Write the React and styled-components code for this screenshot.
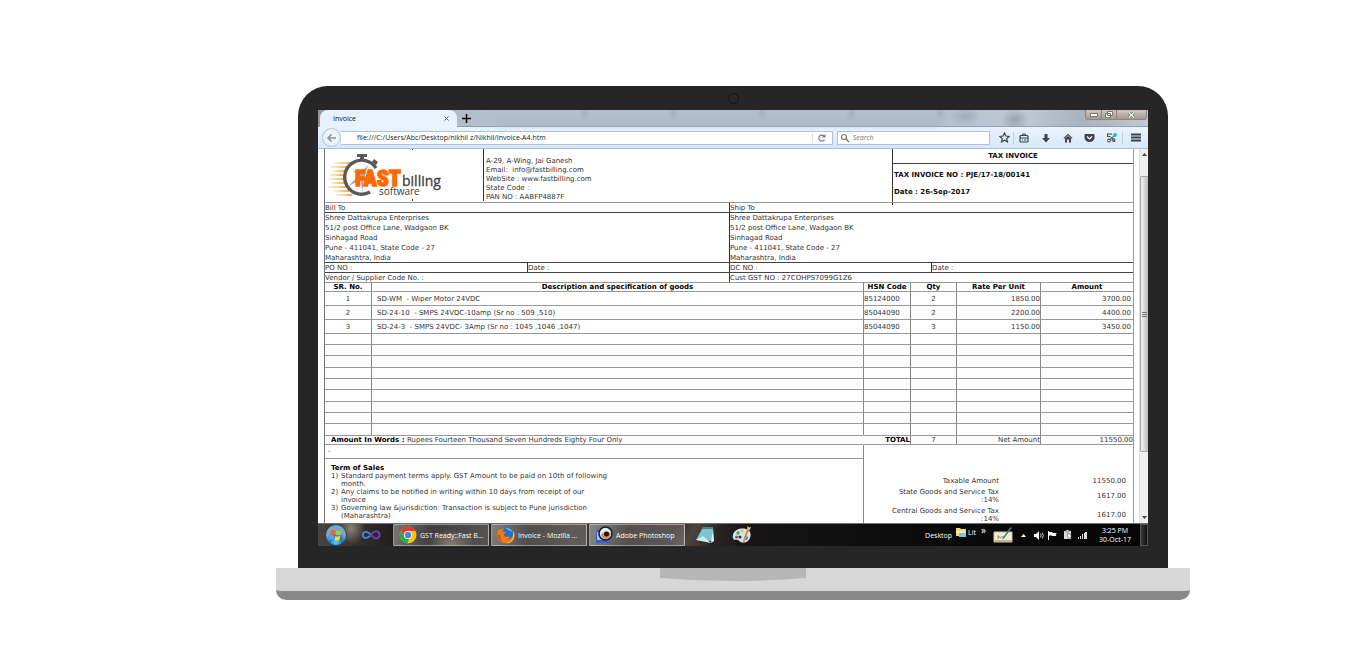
import React, { useState } from 'react';

import styled, { createGlobalStyle } from 'styled-components';

const GlobalStyle = createGlobalStyle`
  * {
    box-sizing: border-box;
  }

  body {
    margin: 0;
    background: #fff;
  }

  button, input {
    margin: 0;
    padding: 0;
    border: none;
    background: none;
    font: inherit;
    color: inherit;
  }

  svg {
    display: block;
    flex-shrink: 0;
  }
`;

const verdana = '"DejaVu Sans", Verdana, sans-serif';
const segoe = '"Open Sans", "Segoe UI", sans-serif';

/* laptop */

const Page = styled.main`
  padding: 86px 156px 48px 276px;
`;

const Lid = styled.div`
  margin: 0 22px;
  padding: 0 20px 22px;
  background: #262626;
  border-radius: 30px 30px 0 0;
`;

const CameraBar = styled.div`
  display: flex;
  justify-content: center;
  align-items: center;
  height: 24px;
`;

const Camera = styled.div`
  width: 11px;
  height: 11px;
  border: 1px solid #121212;
  border-radius: 50%;
`;

const Screen = styled.div`
  overflow: hidden;
  background: #fff;
  font-family: ${segoe};
  font-size: 7px;
  line-height: 9px;
`;

const Base = styled.div`
  display: flex;
  justify-content: center;
  height: 32px;
  background: #d7d7d7;
  border-bottom: 9px solid #888;
  border-radius: 0 0 10px 10px;
`;

const Notch = styled.svg`
  width: 146px;
  height: 13px;
`;

/* browser */

const TabStrip = styled.div`
  display: flex;
  align-items: flex-end;
  height: 17px;
  padding-left: 2px;
  background:
    radial-gradient(ellipse 16px 9px at 78% 40%, #9eabb8, transparent),
    radial-gradient(ellipse 14px 12px at 84% 60%, #99a3ad, transparent),
    linear-gradient(90deg, #9a9390 0, #a9adb3 2%, #b3c0ce 20%, #aebccb 70%, #bdc9d5 85%, #a7b3bf 92%, #c3c9cf 100%);
  border-bottom: 1px solid #8d9db0;
`;

const Tab = styled.div`
  display: flex;
  align-items: center;
  align-self: stretch;
  justify-content: space-between;
  width: 137px;
  margin-bottom: -1px;
  padding: 0 7px 0 13px;
  background: #e8f2fc;
  border-radius: 8px 8px 0 0;
  color: #111;
`;

const TabButton = styled.button`
  display: flex;
  align-items: center;
  justify-content: center;
  width: 7px;
  height: 9px;
  color: #555;
`;

const NewTab = styled.button`
  display: flex;
  align-items: center;
  justify-content: center;
  width: 18px;
  height: 16px;
`;

const GhostTabs = styled.div`
  display: flex;
  flex: 1;
  align-self: stretch;
  margin: 0 0 0 22px;
  filter: blur(2px);
`;

const GhostTab = styled.div`
  flex: 1;
  max-width: 89px;
  background:
    radial-gradient(ellipse 5px 7px at 100% 20%, #8593a2, transparent),
    linear-gradient(#b3c1cf, #adbac8);
`;

const WindowControls = styled.div`
  display: flex;
  align-self: flex-start;
  height: 10px;
  margin-right: 1px;
  border: 1px solid #8e8683;
  border-top: none;
  border-radius: 0 0 3px 3px;
  background: linear-gradient(#cfc6c1, #a39a95);
`;

const WindowButton = styled.button`
  display: flex;
  align-items: center;
  justify-content: center;
  width: ${props => (props.$wide ? '30px' : '15px')};
  border-left: ${props => (props.$first ? 'none' : '1px solid #8a817d')};
`;

const Toolbar = styled.div`
  display: flex;
  align-items: center;
  height: 22px;
  padding-left: 4px;
  background: linear-gradient(#e9f3fd, #d8e8f8);
  border-bottom: 1px solid #a8bfd6;
`;

const BackButton = styled.button`
  display: flex;
  align-items: center;
  justify-content: center;
  width: 19px;
  height: 19px;
  background: #eaf3fb;
  border: 1px solid #b0c2d4;
  border-radius: 50%;
`;

const Field = styled.label`
  display: flex;
  align-items: center;
  flex: ${props => props.$grow};
  height: 14px;
  margin-right: 4px;
  background: #fff;
  border: 1px solid #b0c2d5;
  border-left-width: ${props => (props.$joined ? '0' : '1px')};
`;

const UrlInput = styled.input`
  flex: 1;
  min-width: 0;
  padding-left: 16px;
  color: #222;
  outline: none;
`;

const SearchInput = styled.input`
  flex: 1;
  min-width: 0;
  padding-left: 3px;
  outline: none;

  &::placeholder {
    color: #777;
    font-style: italic;
    opacity: 1;
  }
`;

const ReloadButton = styled.button`
  display: flex;
  align-items: center;
  justify-content: center;
  width: 20px;
  height: 10px;
  border-left: 1px solid #d9dfe6;
`;

const ToolbarButton = styled.button`
  display: flex;
  align-items: center;
  justify-content: center;
  width: ${props => props.$width || '22px'};
  height: 12px;
  border-left: 1px solid ${props => (props.$divided ? '#c3cfdb' : 'transparent')};
  color: #3d4349;
`;

const Viewport = styled.div`
  display: flex;
  height: 374px;
  overflow: hidden;
  font-family: ${verdana};
  color: #333;
`;

const Scrollbar = styled.div`
  display: flex;
  flex-direction: column;
  align-items: center;
  width: 9px;
  padding: 2px 0;
  background: #efefef;
  border-left: 1px solid #ddd;
`;

const ScrollThumb = styled.div`
  display: flex;
  align-items: center;
  justify-content: center;
  width: 9px;
  height: 276px;
  margin: 18px 0 auto;
  background: linear-gradient(90deg, #f1f1f1, #d2d2d6 60%, #b9b9c0);
  border: 1px solid #a8a8ac;
  border-radius: 1px;
`;

/* invoice */

const Invoice = styled.article`
  flex: 1;
  margin: 0 5px 0 6px;
  border-left: 1px solid #777;
  border-right: 1px solid #999;
`;

const InvoiceHeader = styled.header`
  display: grid;
  grid-template-columns: 158px 1fr 241px;
  height: 53px;
`;

const LogoCell = styled.div`
  padding-left: 3px;
`;

const Company = styled.address`
  height: 52px;
  padding: 8px 2px 0;
  border-left: 1px solid #333;
  font-style: normal;
  white-space: pre;
`;

const InvoiceInfo = styled.div`
  border-left: 1px solid #333;
  font-weight: bold;
  color: #111;
`;

const InvoiceTitle = styled.h1`
  height: 15px;
  margin: 0;
  padding-top: 3px;
  border-bottom: 1px solid #444;
  font-size: 7px;
  line-height: 9px;
  text-align: center;
`;

const InfoLine = styled.p`
  margin: 0 0 8px;
  padding-left: 1px;

  &:first-of-type {
    margin-top: 7px;
  }
`;

const Parties = styled.section`
  display: grid;
  grid-template-columns: repeat(4, 1fr);
  grid-template-rows: 10px 50px 10px 10px;
`;

const PartyCell = styled.div`
  grid-column: span ${props => props.$span || 1};
  border-top: 1px solid ${props => (props.$light ? '#999' : '#444')};
  border-left: ${props => (props.$divided ? '1px solid #333' : 'none')};
  line-height: 10px;
  white-space: pre;
`;

const Items = styled.table`
  width: 100%;
  table-layout: fixed;
  border-collapse: separate;
  border-spacing: 0;
`;

const Col = styled.col`
  width: ${props => props.$width || 'auto'};
`;

const HeadCell = styled.th`
  height: 9px;
  padding: 0;
  border-top: 1px solid #999;
  border-left: 1px solid #888;
  line-height: 8px;
  color: #000;

  &:first-child {
    border-left: none;
  }
`;

const Cell = styled.td`
  height: 14px;
  padding: 1px ${props => props.$right || 0} 0 ${props => props.$left || 0};
  border-top: 1px solid #999;
  border-left: 1px solid #888;
  line-height: 10px;
  text-align: ${props => props.$align || 'left'};
  white-space: pre;

  &:first-child {
    border-left: none;
  }
`;

const EmptyRow = styled.tr`
  td {
    height: 11px;
  }

  &:nth-child(3n) td {
    height: 12px;
  }
`;

const TotalCell = styled(Cell)`
  height: 10px;
  padding-top: 0;
  border-left-color: ${props => (props.$open ? 'transparent' : '#888')};
  border-bottom: 1px solid #999;
  line-height: 8px;
`;

const Strong = styled.strong`
  color: #000;
`;

const Footer = styled.footer`
  display: grid;
  grid-template-columns: 1fr 270px;
`;

const Remark = styled.div`
  height: 14px;
  padding: 2px 3px;
  border-bottom: 1px solid #999;
`;

const Terms = styled.section`
  padding: 5px 6px;
  line-height: 8px;
`;

const TermsTitle = styled.h2`
  margin: 0;
  font-size: 7px;
  line-height: 8px;
  color: #000;
`;

const TermsList = styled.ul`
  width: 290px;
  margin: 0;
  padding: 0;
  list-style: none;
`;

const Term = styled.li`
  display: grid;
  grid-template-columns: 10px 1fr;
  white-space: pre;
`;

const Taxes = styled.div`
  padding-top: 31px;
  border-left: 1px solid #888;
`;

const TaxTable = styled.table`
  width: 100%;
  border-collapse: collapse;
  line-height: 8px;
  text-align: right;
`;

const TaxLabel = styled.th`
  width: 135px;
  padding: 1px 0 2px;
  font-weight: normal;
  white-space: pre;
`;

const TaxValue = styled.td`
  padding: 0 7px 2px 0;
`;

/* taskbar */

const Taskbar = styled.footer`
  display: flex;
  align-items: center;
  height: 23px;
  padding-left: 6px;
  background:
    radial-gradient(ellipse 14px 16px at 4% 20%, #8d8172, transparent),
    radial-gradient(ellipse 24px 14px at 16% 90%, #6d6459, transparent),
    linear-gradient(120deg, transparent 43%, #4b433d 45%, transparent 48%),
    linear-gradient(90deg, #4a443e 0, #1c1a19 10%, #3a3633 30%, #37312d 44%, #171515 52%, #0c0c0c 70%, #060606 100%);
  border-top: 1px solid #6e6e6e;
  color: #fff;
`;

const IconButton = styled.button`
  display: flex;
  align-items: center;
  justify-content: center;
  width: ${props => props.$width};
  height: 22px;
`;

const TaskButton = styled.button`
  display: flex;
  align-items: center;
  gap: 3px;
  width: 96px;
  height: 22px;
  margin-right: 2px;
  padding-left: 5px;
  background: linear-gradient(100deg, rgba(255, 255, 255, 0.4), rgba(255, 255, 255, 0.14) 40%, rgba(255, 255, 255, 0.2));
  border: 1px solid rgba(255, 255, 255, 0.4);
  border-radius: 1px;
  white-space: nowrap;
`;

const Tray = styled.div`
  display: flex;
  align-items: center;
  margin-left: auto;
`;

const Libraries = styled.div`
  display: flex;
  gap: 2px;
  margin: 0 5px 5px 4px;
`;

const Overflow = styled.button`
  margin: 0 7px 10px 0;
  font-size: 10px;
`;

const Clock = styled.time`
  width: 50px;
  text-align: center;
`;

const ShowDesktop = styled.button`
  width: 8px;
  height: 22px;
  background: linear-gradient(90deg, #3a3a3a, #111);
  border: 1px solid #555;
`;

const Logo = () => (
  <svg width="122" height="52" viewBox="0 0 122 52">
    <defs>
      <linearGradient id="speed">
        <stop offset="0" stopColor="#fbb040" stopOpacity="0.15" />
        <stop offset="1" stopColor="#f7941d" stopOpacity="0.8" />
      </linearGradient>
    </defs>
    {[13, 17, 21, 25, 29, 33, 37, 41, 45].map((y, i) => (
      <rect
        key={y}
        x={[5, 2, 4, 1, 0, 3, 0, 5, 7][i]}
        y={y}
        width={[19, 17, 13, 14, 16, 13, 19, 16, 17][i]}
        height="2"
        fill="url(#speed)"
      />
    ))}
    <circle cx="33.5" cy="28" r="16" fill="#fff" />
    <path d="M48 19A17 17 0 1 0 42 43" fill="none" stroke="#58595b" strokeWidth="3.400" />
    <path d="M29 5h10v3h-3v3h-4V8h-3zM46 10l4 3-2 3-4-3z" fill="#58595b" />
    <path d="m40 16-4 14-2 14-1-13-13 6 11-10-7-6 8 4z" fill="#a7a9ac" />
    <text
      x="27"
      y="37"
      fontFamily='"Liberation Sans Narrow", "Roboto Condensed", "Open Sans Condensed", Roboto, sans-serif'
      fontWeight="900"
      fontSize="22"
      fill="#ff6a00"
      stroke="#ff6a00"
      strokeWidth="1.400"
    >
      FAST
    </text>
    <text x="74" y="37" fontFamily='"Open Sans", sans-serif' fontSize="14" fill="#414042" stroke="#414042" strokeWidth="0.300">billing</text>
    <text x="51" y="46" fontFamily='"Open Sans", sans-serif' fontSize="10" fill="#414042">software</text>
    <path d="M84 0h1v1h-1zM84 50h1v2h-1z" fill="#333" />
  </svg>
);

const StarIcon = () => (
  <svg width="11" height="11" viewBox="0 0 11 11">
    <path d="M5.500 1 6.900 4l3.200.4-2.400 2.200.7 3.300-2.900-1.700-2.900 1.700.7-3.300L.9 4.400 4.100 4z" fill="none" stroke="currentColor" strokeWidth="1.200" />
  </svg>
);

const ClipboardIcon = () => (
  <svg width="10" height="10" viewBox="0 0 10 10">
    <rect x="1" y="2.500" width="8" height="6.500" rx="1" fill="none" stroke="currentColor" strokeWidth="1.200" />
    <path d="M3.500 2.500v-1.500h3v1.500M1 5h8M3 7h1M5 7h2" fill="none" stroke="currentColor" />
  </svg>
);

const DownloadIcon = () => (
  <svg width="10" height="10" viewBox="0 0 10 10">
    <path d="M3.500 1h3v4H9L5 9.500 1 5h2.500z" fill="currentColor" />
  </svg>
);

const HomeIcon = () => (
  <svg width="10" height="10" viewBox="0 0 10 10">
    <path d="M5 .8 9.500 5l-.7.7L5 2.300 1.200 5.700.5 5zM2 5.600l3-2.600 3 2.600V9.500H6V6.500H4v3H2z" fill="currentColor" />
  </svg>
);

const PocketIcon = () => (
  <svg width="11" height="10" viewBox="0 0 11 10">
    <path d="M1.500 1h8q1 0 1 1v2.500a5 4.500 0 0 1-10 0V2q0-1 1-1z" fill="currentColor" />
    <path d="M3 3.500 5.500 6 8 3.500" fill="none" stroke="#fff" strokeWidth="1.200" />
  </svg>
);

const ScissorsIcon = () => (
  <svg width="12" height="11" viewBox="0 0 12 11">
    <path d="M1 2h5M1.500 2v2.500h3M3 8l5-4M5 5l4 5" fill="none" stroke="currentColor" />
    <circle cx="3" cy="8.500" r="1.500" fill="none" stroke="currentColor" />
    <circle cx="7.500" cy="8" r="1.500" fill="none" stroke="currentColor" />
    <circle cx="9" cy="3" r="2" fill="#12c8d8" />
  </svg>
);

const MenuIcon = () => (
  <svg width="10" height="9" viewBox="0 0 10 9">
    <path d="M0 1.500h10M0 4.500h10M0 7.500h10" stroke="currentColor" strokeWidth="2" />
  </svg>
);

const StartIcon = () => (
  <svg width="22" height="22" viewBox="0 0 22 22">
    <defs>
      <radialGradient id="orb" cx="0.5" cy="0.85">
        <stop offset="0" stopColor="#5fd4f5" />
        <stop offset="0.6" stopColor="#2371b0" />
        <stop offset="1" stopColor="#7aa6c6" />
      </radialGradient>
    </defs>
    <circle cx="11" cy="11" r="10.500" fill="url(#orb)" stroke="#1d4668" />
    <path d="M5.500 7q2.500-2 5-.7l-.8 4.200q-2.500-1.200-5 .5z" fill="#f0642b" />
    <path d="M11.300 6.700q2.500 1.200 5-.5l-.8 4.200q-2.500 1.600-5 .4z" fill="#9cd33c" />
    <path d="M4.500 12q2.500-1.700 5-.5l-.8 4.200q-2.500-1.200-5 .3z" fill="#49a8ec" />
    <path d="M10.300 11.900q2.500 1.200 5-.4l-.8 4.200q-2.500 1.600-5 .3z" fill="#ffd23e" />
  </svg>
);

const VisualStudioIcon = () => (
  <svg width="20" height="12" viewBox="0 0 20 12">
    <path d="M10 6C7 2.500 5.500 2.500 4 3 1 4.200 1 8 4 9c2.500.7 4-1 6-3" fill="none" stroke="#3f86d8" strokeWidth="2" />
    <path d="M9 7c3-4 5-5.500 7.500-4.500C19.500 4 19 8.500 16 9.300c-2.500.6-4-1.300-6-3.300" fill="none" stroke="#6a3fb4" strokeWidth="2" />
  </svg>
);

const ChromeIcon = () => (
  <svg width="18" height="18" viewBox="0 0 18 18">
    <circle cx="9" cy="9" r="8.500" fill="#fbc116" />
    <path d="M1.600 4.800A8.500 8.500 0 0 1 16.500 5H9a4 4 0 0 0-3.900 5z" fill="#e33b2e" />
    <path d="M1.600 4.800 5.500 11A4 4 0 0 0 10 12.900L8.500 17.500A8.500 8.500 0 0 1 1.600 4.800z" fill="#2da94f" />
    <circle cx="9" cy="9" r="4" fill="#fff" />
    <circle cx="9" cy="9" r="3.200" fill="#4a86e8" />
  </svg>
);

const FirefoxIcon = () => (
  <svg width="18" height="18" viewBox="0 0 18 18">
    <circle cx="9.500" cy="8.500" r="7.500" fill="#2b6fc0" />
    <path d="M8 2q5-1 8 4l-3-1z" fill="#57b6e8" />
    <path d="M1 3q1 1 2 1 2-2 4-1.500Q5.500 4 6 5.500l3 .8-2 2q0 3 3.500 2.500 1.500-.5 2.500.2-1 2-3 2.200 4 .8 6-4 .6-2-.3-4.700Q18.500 8 17.500 11.500 15.500 17.500 9 17.500.5 17 .5 9 .3 6 1 3z" fill="#ef7b1a" />
    <path d="M16 5q2 4 .8 7-2 5-7.300 5.300Q15 15 16 11z" fill="#ffc23a" />
    <path d="M1 9q.5 6 6 8 -4.500-3-4-8z" fill="#d8411c" />
  </svg>
);

const PhotoshopIcon = () => (
  <svg width="18" height="18" viewBox="0 0 18 18">
    <path d="M1 4h14v13H1z" fill="#3c5fd0" />
    <path d="M2 6h6v8H2z" fill="#8ec6f2" />
    <circle cx="10.500" cy="7.500" r="6.500" fill="#e7edf2" stroke="#14202e" strokeWidth="1.600" />
    <path d="M6 9q4-6 10-2-1 5-5 6-4-1-5-4z" fill="#d98e4c" />
    <circle cx="11.500" cy="8" r="2.500" fill="#1c120c" />
  </svg>
);

const NotepadIcon = () => (
  <svg width="20" height="18" viewBox="0 0 20 18">
    <path d="M8 1h10l-1 14-16-1z" fill="#7cc3d2" />
    <path d="M8 1h10v2H7z" fill="#4c7f8c" />
    <path d="M18 2 19 15l-3 2z" fill="#e3f3f6" />
    <path d="m1 14 7-4 8 7z" fill="#cdeef2" />
  </svg>
);

const PaintIcon = () => (
  <svg width="20" height="18" viewBox="0 0 20 18">
    <path d="M9 2.500C3 3 0 8 1 12c1 3 3 1 5 2s2 3 6 2.500c5-.5 7-5 6.500-9S13 2 9 2.500z" fill="#cfe6f6" />
    <circle cx="6" cy="7" r="1.700" fill="#3fae49" />
    <circle cx="10" cy="5" r="1.500" fill="#f2c028" />
    <circle cx="4.500" cy="11" r="1.500" fill="#d8352b" />
    <circle cx="8" cy="11" r="1.600" fill="#28323c" />
    <circle cx="14" cy="12" r="2" fill="#3a8fe0" />
    <path d="m17 4-5 13-1.500-.5L15 3z" fill="#e8862a" />
    <path d="m15 3 .5-3 1.500 1.500L19 1l-1.500 3.500z" fill="#e9bf8b" />
  </svg>
);

const FolderIcon = () => (
  <svg width="10" height="9" viewBox="0 0 10 9">
    <path d="M0 0h4l1 1h5v7H0z" fill="#f4d774" />
    <path d="M3 5h7v4H3z" fill="#7ec4ea" />
    <path d="M0 3h9v2H0z" fill="#fbe9a6" />
  </svg>
);

const TabletIcon = () => (
  <svg width="20" height="16" viewBox="0 0 20 16">
    <path d="M1 5h18v10H1z" fill="#f3efcb" stroke="#c9c6ae" />
    <path d="M1 13h18v2H1z" fill="#b9b795" />
    <path d="M4 9h2v2H4M7 11q3-3 5-1" fill="none" stroke="#7d8a92" />
    <path d="M17.500 0 10 10.500l-1 2 2-1.200L19 1z" fill="#4b6f96" />
  </svg>
);

const VolumeIcon = () => (
  <svg width="10" height="9" viewBox="0 0 10 9">
    <path d="M0 3h2l3-3v9L2 6H0z" fill="#fff" />
    <path d="M6.500 2.500q1.300 2 0 4M8.300 1.500q2 3 0 6" fill="none" stroke="#ccc" />
  </svg>
);

const FlagIcon = () => (
  <svg width="9" height="9" viewBox="0 0 9 9">
    <path d="M0 0h1v9H0zM1 1h3l1 1h4L7.500 3.500 8.500 5H4.500l-1-.5H1z" fill="#fff" />
  </svg>
);

const DeviceIcon = () => (
  <svg width="9" height="10" viewBox="0 0 9 10">
    <path d="M1 1h7v8H1z" fill="#ddd" />
    <path d="M3 0h3v2H3zM4 4h4v4H5z" fill="#fff" stroke="#555" strokeWidth="0.600" />
  </svg>
);

const SignalIcon = () => (
  <svg width="9" height="8" viewBox="0 0 9 8">
    <path d="M0 6h1v2H0zM2 5h1v3H2zM4 3h1v5H4zM6 2h1v6H6zM7 1h2v7H7z" fill="#ddd" />
  </svg>
);

const items = [
  { name: 'SD-WM  - Wiper Motor 24VDC', hsn: '85124000', qty: 2, rate: '1850.00', amount: '3700.00' },
  { name: 'SD-24-10  - SMPS 24VDC-10amp (Sr no : 509 ,510)', hsn: '85044090', qty: 2, rate: '2200.00', amount: '4400.00' },
  { name: 'SD-24-3  - SMPS 24VDC- 3Amp (Sr no : 1045 ,1046 ,1047)', hsn: '85044090', qty: 3, rate: '1150.00', amount: '3450.00' },
];

const emptyRows = [0, 1, 2, 3, 4, 5, 6, 7, 8];

const headings = [
  'SR. No.',
  'Description and specification of goods',
  'HSN Code',
  'Qty',
  'Rate Per Unit',
  'Amount',
];

const terms = [
  'Standard payment terms apply. GST Amount to be paid on 10th of following\nmonth.',
  'Any claims to be notified in writing within 10 days from receipt of our\ninvoice',
  'Governing law &jurisdiction: Transaction is subject to Pune jurisdiction\n(Maharashtra)',
];

const taxes = [
  { label: 'Taxable Amount', value: '11550.00' },
  { label: 'State Goods and Service Tax\n:14%', value: '1617.00' },
  { label: 'Central Goods and Service Tax\n:14%', value: '1617.00' },
];

const customer =
  'Shree Dattakrupa Enterprises\n51/2 post Office Lane, Wadgaon BK\nSinhagad Road\nPune - 411041, State Code - 27\nMaharashtra, India';

const company =
  'A-29, A-Wing, Jai Ganesh\nEmail:  info@fastbilling.com\nWebSite : www.fastbilling.com\nState Code :\nPAN NO : AABFP4887F';

const BrowserChrome = () => {
  const [url, setUrl] = useState('file:///C:/Users/Abc/Desktop/nikhil z/Nikhil/Invoice-A4.htm');

  return (
    <>
      <TabStrip>
        <Tab>
          Invoice
          <TabButton aria-label="Close tab">
            <svg width="5" height="5" viewBox="0 0 5 5">
              <path d="m.5.5 4 4m0-4-4 4" stroke="currentColor" />
            </svg>
          </TabButton>
        </Tab>
        <NewTab aria-label="New tab">
          <svg width="9" height="9" viewBox="0 0 9 9">
            <path d="M4 0h1v4h4v1H5v4H4V5H0V4h4z" stroke="#111" strokeWidth="0.500" />
          </svg>
        </NewTab>
        <GhostTabs>
          <GhostTab />
          <GhostTab />
          <GhostTab />
          <GhostTab />
          <GhostTab />
        </GhostTabs>
        <WindowControls>
          <WindowButton $first aria-label="Minimize">
            <svg width="8" height="4" viewBox="0 0 8 4">
              <path d="M.5.500h7v3h-7z" fill="#fff" stroke="#777" />
            </svg>
          </WindowButton>
          <WindowButton aria-label="Restore">
            <svg width="8" height="7" viewBox="0 0 8 7">
              <path d="M2.500.500h5v4h-5zM.500 2.500h5v4h-5z" fill="#fff" stroke="#777" />
            </svg>
          </WindowButton>
          <WindowButton $wide aria-label="Close">
            <svg width="7" height="6" viewBox="0 0 7 6">
              <path d="m1 .5 5 5m0-5-5 5" stroke="#666" strokeWidth="2.500" />
              <path d="m1 .5 5 5m0-5-5 5" stroke="#fff" strokeWidth="1.200" />
            </svg>
          </WindowButton>
        </WindowControls>
      </TabStrip>
      <Toolbar>
        <BackButton aria-label="Back">
          <svg width="9" height="8" viewBox="0 0 9 8">
            <path d="M4.500.500 1 4l3.500 3.500M1 4h8" fill="none" stroke="#8d979f" strokeWidth="1.600" />
          </svg>
        </BackButton>
        <Field $grow="493" $joined>
          <UrlInput aria-label="Address" value={url} onChange={e => setUrl(e.target.value)} />
          <ReloadButton aria-label="Reload">
            <svg width="8" height="8" viewBox="0 0 8 8">
              <path d="M6.500 5.500A3 3 0 1 1 6 2" fill="none" stroke="#6e7a85" strokeWidth="1.200" />
              <path d="M7.500 0v3.500H4z" fill="#6e7a85" />
            </svg>
          </ReloadButton>
        </Field>
        <Field $grow="152">
          <svg width="12" height="10" viewBox="0 0 12 10">
            <circle cx="6" cy="4" r="2.500" fill="none" stroke="#777" strokeWidth="1.200" />
            <path d="m8 6 3 3" stroke="#777" strokeWidth="1.600" />
          </svg>
          <SearchInput aria-label="Search" placeholder="Search" />
        </Field>
        <ToolbarButton $width="19px" aria-label="Bookmark"><StarIcon /></ToolbarButton>
        <ToolbarButton $width="21px" $divided aria-label="Bookmarks list"><ClipboardIcon /></ToolbarButton>
        <ToolbarButton aria-label="Downloads"><DownloadIcon /></ToolbarButton>
        <ToolbarButton aria-label="Home"><HomeIcon /></ToolbarButton>
        <ToolbarButton aria-label="Pocket"><PocketIcon /></ToolbarButton>
        <ToolbarButton aria-label="Screen capture"><ScissorsIcon /></ToolbarButton>
        <ToolbarButton $width="26px" $divided aria-label="Menu"><MenuIcon /></ToolbarButton>
      </Toolbar>
    </>
  );
};

const InvoiceDocument = () => (
  <Invoice>
    <InvoiceHeader>
      <LogoCell><Logo /></LogoCell>
      <Company>{company}</Company>
      <InvoiceInfo>
        <InvoiceTitle>TAX INVOICE</InvoiceTitle>
        <InfoLine>TAX INVOICE NO : PJE/17-18/00141</InfoLine>
        <InfoLine>Date : 26-Sep-2017</InfoLine>
      </InvoiceInfo>
    </InvoiceHeader>
    <Parties>
      <PartyCell $span={2} $light>Bill To</PartyCell>
      <PartyCell $span={2} $light $divided>Ship To</PartyCell>
      <PartyCell $span={2}>{customer}</PartyCell>
      <PartyCell $span={2} $divided>{customer}</PartyCell>
      <PartyCell>PO NO :</PartyCell>
      <PartyCell $divided>Date :</PartyCell>
      <PartyCell $divided>DC NO :</PartyCell>
      <PartyCell $divided>Date :</PartyCell>
      <PartyCell $span={2}>Vendor / Supplier Code No. :</PartyCell>
      <PartyCell $span={2} $divided>Cust GST NO : 27COHPS7099G1Z6</PartyCell>
    </Parties>
    <Items>
      <colgroup>
        <Col $width="46px" />
        <Col />
        <Col $width="47px" />
        <Col $width="46px" />
        <Col $width="84px" />
        <Col $width="93px" />
      </colgroup>
      <thead>
        <tr>
          {headings.map(heading => (
            <HeadCell key={heading}>{heading}</HeadCell>
          ))}
        </tr>
      </thead>
      <tbody>
        {items.map((item, i) => (
          <tr key={item.name}>
            <Cell $align="center">{i + 1}</Cell>
            <Cell $left="5px">{item.name}</Cell>
            <Cell>{item.hsn}</Cell>
            <Cell $align="center">{item.qty}</Cell>
            <Cell $align="right">{item.rate}</Cell>
            <Cell $align="right" $right="2px">{item.amount}</Cell>
          </tr>
        ))}
        {emptyRows.map(row => (
          <EmptyRow key={row}>
            {headings.map(heading => (
              <Cell key={heading} />
            ))}
          </EmptyRow>
        ))}
      </tbody>
      <tfoot>
        <tr>
          <TotalCell colSpan={2} $left="6px">
            <Strong>Amount In Words : </Strong>
            Rupees Fourteen Thousand Seven Hundreds Eighty Four Only
          </TotalCell>
          <TotalCell $open $align="right"><Strong>TOTAL</Strong></TotalCell>
          <TotalCell $align="center">7</TotalCell>
          <TotalCell $align="right">Net Amount</TotalCell>
          <TotalCell $align="right">11550.00</TotalCell>
        </tr>
      </tfoot>
    </Items>
    <Footer>
      <div>
        <Remark>-</Remark>
        <Terms>
          <TermsTitle>Term of Sales</TermsTitle>
          <TermsList>
            {terms.map((term, i) => (
              <Term key={term}>
                <span>{i + 1})</span>
                <span>{term}</span>
              </Term>
            ))}
          </TermsList>
        </Terms>
      </div>
      <Taxes>
        <TaxTable>
          <tbody>
            {taxes.map(tax => (
              <tr key={tax.label}>
                <TaxLabel scope="row">{tax.label}</TaxLabel>
                <TaxValue>{tax.value}</TaxValue>
              </tr>
            ))}
          </tbody>
        </TaxTable>
      </Taxes>
    </Footer>
  </Invoice>
);

const WindowsTaskbar = () => (
  <Taskbar>
    <IconButton $width="24px" aria-label="Start"><StartIcon /></IconButton>
    <IconButton $width="45px" aria-label="Visual Studio"><VisualStudioIcon /></IconButton>
    <TaskButton><ChromeIcon />GST Ready::Fast B...</TaskButton>
    <TaskButton><FirefoxIcon />Invoice - Mozilla ...</TaskButton>
    <TaskButton><PhotoshopIcon />Adobe Photoshop</TaskButton>
    <IconButton $width="36px" aria-label="Notepad"><NotepadIcon /></IconButton>
    <IconButton $width="38px" aria-label="Paint"><PaintIcon /></IconButton>
    <Tray>
      <span>Desktop</span>
      <Libraries><FolderIcon />Lit</Libraries>
      <Overflow aria-label="More folders">»</Overflow>
      <TabletIcon />
      <IconButton $width="20px" aria-label="Hidden icons">
        <svg width="5" height="3" viewBox="0 0 5 3">
          <path d="M2.500 0 5 3H0z" fill="#fff" />
        </svg>
      </IconButton>
      <IconButton $width="12px" aria-label="Volume"><VolumeIcon /></IconButton>
      <IconButton $width="15px" aria-label="Action center"><FlagIcon /></IconButton>
      <IconButton $width="15px" aria-label="Devices"><DeviceIcon /></IconButton>
      <IconButton $width="15px" aria-label="Network"><SignalIcon /></IconButton>
      <Clock>3:25 PM<br />30-Oct-17</Clock>
      <ShowDesktop aria-label="Show desktop" />
    </Tray>
  </Taskbar>
);

const App = () => (
  <Page>
    <GlobalStyle />
    <Lid>
      <CameraBar><Camera /></CameraBar>
      <Screen>
        <BrowserChrome />
        <Viewport>
          <InvoiceDocument />
          <Scrollbar>
            <svg width="5" height="7" viewBox="0 0 5 7">
              <path d="M2.500 2 5 5H0z" fill="#444" />
            </svg>
            <ScrollThumb>
              <svg width="5" height="5" viewBox="0 0 5 5">
                <path d="M0 .5h5M0 2.500h5M0 4.500h5" stroke="#777" />
              </svg>
            </ScrollThumb>
            <svg width="5" height="7" viewBox="0 0 5 7">
              <path d="M0 2h5L2.500 5z" fill="#444" />
            </svg>
          </Scrollbar>
        </Viewport>
        <WindowsTaskbar />
      </Screen>
    </Lid>
    <Base>
      <Notch viewBox="0 0 146 13" preserveAspectRatio="none">
        <path d="M0 0h146v10Q73 16 0 10z" fill="#b6b6b6" />
      </Notch>
    </Base>
  </Page>
);

export default App;
